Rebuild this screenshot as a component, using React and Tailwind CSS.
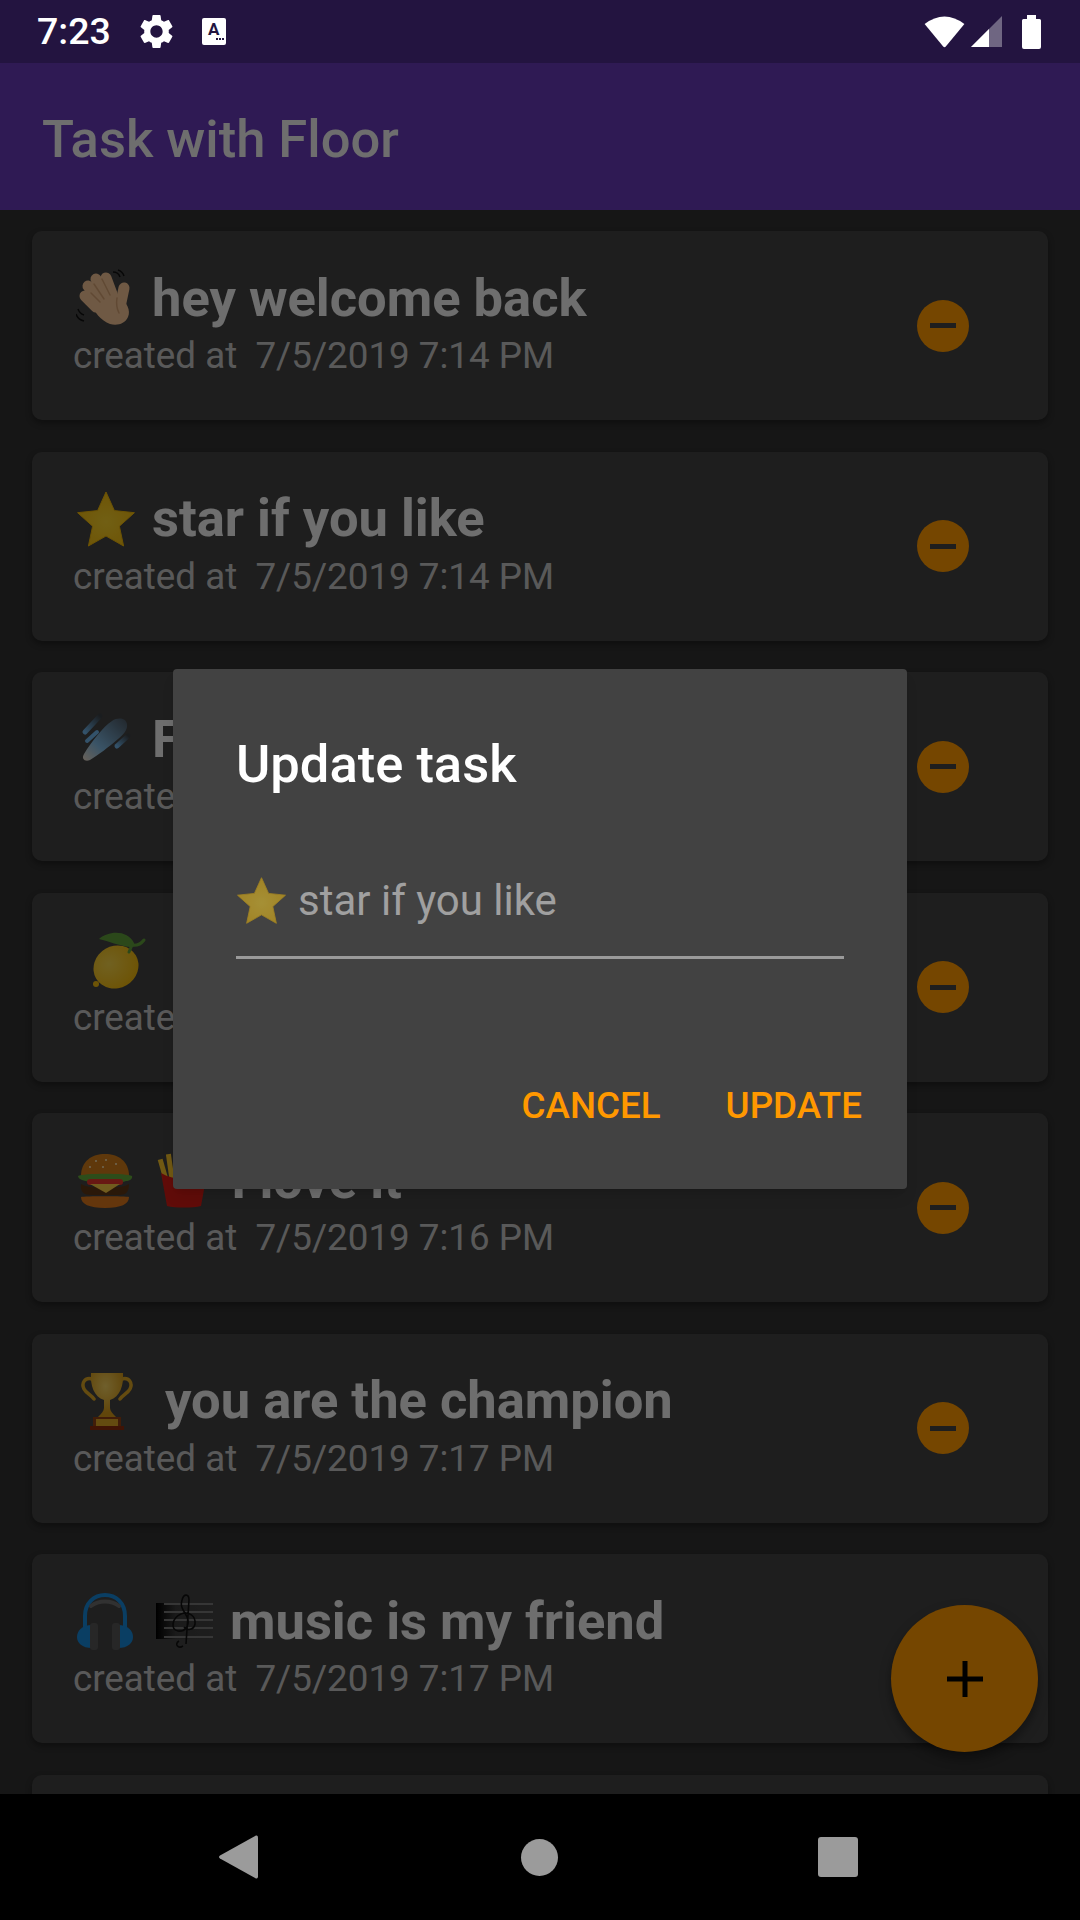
import React from 'react';

function Star({ size = 58, className = '' }) {
  return (
    <svg width={size} height={size} viewBox="0 0 58 58" className={className}>
      <defs>
        <radialGradient id="starFill" cx="50%" cy="55%" r="55%">
          <stop offset="0%" stopColor="#f7d02c" />
          <stop offset="100%" stopColor="#efb90f" />
        </radialGradient>
      </defs>
      <path
        d="M29 2l8.400 18.600 20 2.100-15 13.500 4.200 19.800L29 46 11.400 56l4.200-19.800-15-13.500 20-2.100z"
        fill="url(#starFill)"
        stroke="#eab308"
        strokeWidth="1"
        strokeLinejoin="round"
      />
    </svg>
  );
}

function Hand() {
  return (
    <svg width="58" height="58" viewBox="0 0 58 58">
      <g stroke="#f2c294" strokeLinecap="round" fill="none" strokeWidth="11">
        <path d="M20 38L9 27" />
        <path d="M24 32L12 17" />
        <path d="M30 27L20 10" />
        <path d="M36 25L30 9" />
        <path d="M44 38L48 19" />
      </g>
      <path d="M15 30c7-7 20-9 28-3 8 6 12 15 9 21-3 7-11 9-18 7-9-3-16-13-19-19-1-3-1-4 0-6z" fill="#f2c294" />
      <g stroke="#d3a072" strokeWidth="1.500" fill="none" strokeLinecap="round">
        <path d="M15 24l9 9" />
        <path d="M18 15l10 15" />
        <path d="M26 10l8 16" />
        <path d="M41 29c-1 6 0 11 2 15" />
      </g>
      <path d="M37 3c3 0 6 2 7 5M42 1c3 1 5 3 6 6" stroke="#111" strokeWidth="1.500" fill="none" />
      <path d="M2 40c1 3 3 5 6 6M0 45c1 3 4 6 8 7" stroke="#111" strokeWidth="1.500" fill="none" />
    </svg>
  );
}

function Comet() {
  return (
    <svg width="58" height="58" viewBox="0 0 58 58">
      <defs>
        <linearGradient id="cometFill" x1="0" y1="1" x2="1" y2="0">
          <stop offset="0%" stopColor="#e6d6c4" />
          <stop offset="35%" stopColor="#7fb7e0" />
          <stop offset="100%" stopColor="#4a5560" />
        </linearGradient>
        <linearGradient id="cometTail" x1="0" y1="1" x2="1" y2="0">
          <stop offset="0%" stopColor="#6fb2e6" />
          <stop offset="100%" stopColor="#3a3f44" />
        </linearGradient>
      </defs>
      <path d="M8 44c8-13 19-27 28-33 6-4 14-3 15 3 1 6-4 11-9 15-9 8-20 16-28 21-5 2-9-1-6-6z" fill="url(#cometFill)" />
      <path d="M9 22L24 6" stroke="url(#cometTail)" strokeWidth="5" strokeLinecap="round" />
      <path d="M11 31l10-9" stroke="#6fb2e6" strokeWidth="4" strokeLinecap="round" />
      <path d="M41 36l11-10" stroke="url(#cometTail)" strokeWidth="5" strokeLinecap="round" />
    </svg>
  );
}

function Lemon() {
  return (
    <svg width="58" height="58" viewBox="0 0 58 58">
      <defs>
        <radialGradient id="lemonFill" cx="40%" cy="35%" r="65%">
          <stop offset="0%" stopColor="#f5d348" />
          <stop offset="100%" stopColor="#eeb70f" />
        </radialGradient>
      </defs>
      <ellipse cx="27" cy="36" rx="23" ry="21" transform="rotate(-30 27 36)" fill="url(#lemonFill)" />
      <circle cx="7" cy="53" r="3" fill="#eeb70f" />
      <path d="M10 8C20-1 39-1 45 12c1 3-1 4-4 4C30 15 20 10 10 8z" fill="#5f9e3a" />
      <path d="M42 14c5 1 10-1 13-5M43 14l-3 7" stroke="#5f9e3a" strokeWidth="3" strokeLinecap="round" fill="none" />
    </svg>
  );
}

function Burger() {
  return (
    <svg width="58" height="58" viewBox="0 0 58 58">
      <path d="M5 25C5 10 16 3 29 3s24 7 24 22z" fill="#d07a18" />
      <g fill="#f5e3b8">
        <circle cx="20" cy="10" r="1" />
        <circle cx="30" cy="9" r="1" />
        <circle cx="40" cy="13" r="1" />
        <circle cx="27" cy="16" r="1" />
        <circle cx="14" cy="16" r="1" />
      </g>
      <path d="M2 25c5-3 49-3 54 0 1 3-3 5-6 5-4 2-8 0-11 2-3-1-6 1-10 0-4 1-7-2-11-1-4 0-9-1-12-2-2-1-4-2-4-4z" fill="#63a83a" />
      <rect x="11" y="28" width="36" height="6" rx="3" fill="#e2352b" />
      <path d="M5 33c-1 8 3 11 10 11h28c7 0 10-3 10-11-5 3-10 3-15 3H20c-5 0-10 0-15-3z" fill="#5d3514" />
      <path d="M14 33h30L30 42z" fill="#f7c843" />
      <path d="M5 46c3-1 45-1 48 0 0 7-8 11-24 11S5 53 5 46z" fill="#d9761c" />
    </svg>
  );
}

function Fries() {
  return (
    <svg width="58" height="58" viewBox="0 0 58 58">
      <g fill="#f6c32a">
        <rect x="6" y="8" width="5" height="26" transform="rotate(-16 8 20)" />
        <rect x="13" y="3" width="5" height="30" transform="rotate(-8 15 18)" />
        <rect x="21" y="0" width="5" height="32" />
        <rect x="29" y="3" width="5" height="30" />
        <rect x="37" y="1" width="5" height="32" transform="rotate(7 39 18)" />
        <rect x="44" y="8" width="5" height="26" transform="rotate(14 46 20)" />
      </g>
      <path d="M6 22c14 8 32 8 46 0l-6 33c-8 2-26 2-34 0z" fill="#d41c14" />
    </svg>
  );
}

function Trophy() {
  return (
    <svg width="58" height="58" viewBox="0 0 58 58">
      <defs>
        <radialGradient id="cupFill" cx="45%" cy="30%" r="60%">
          <stop offset="0%" stopColor="#f2cf60" />
          <stop offset="100%" stopColor="#d49a1a" />
        </radialGradient>
      </defs>
      <path d="M16 7C9 5 5 11 8 17c2 4 7 6 10 10M46 7c7-2 11 4 8 10-2 4-7 6-10 10" stroke="#d9a423" strokeWidth="3.500" fill="none" strokeLinecap="round" />
      <path d="M15 1h32c1 12-3 24-13 27v8c0 3 3 6 6 9H22c3-3 6-6 6-9v-8C18 25 14 13 15 1z" fill="url(#cupFill)" />
      <rect x="17" y="45" width="28" height="10" fill="#8f3f14" />
      <rect x="20" y="47" width="22" height="7" fill="#d9a423" />
      <rect x="14" y="54" width="34" height="4" fill="#8a2a0c" />
    </svg>
  );
}

function Headphones() {
  return (
    <svg width="58" height="58" viewBox="0 0 58 58">
      <path d="M9 36V24C9 11 18 3 29 3s20 8 20 21v12" stroke="#1787d8" strokeWidth="4" fill="none" />
      <path d="M15 14c8-6 20-6 28 0" stroke="#6b6b6b" strokeWidth="4" fill="none" strokeLinecap="round" />
      <path d="M16 33C6 33 1 39 1 45s5 11 15 11z" fill="#1787d8" />
      <path d="M42 33c10 0 15 6 15 12s-5 11-15 11z" fill="#1787d8" />
      <rect x="14" y="31" width="8" height="27" rx="3" fill="#555" />
      <rect x="36" y="31" width="8" height="27" rx="3" fill="#555" />
    </svg>
  );
}

function Score() {
  return (
    <svg width="58" height="58" viewBox="0 0 58 58">
      <defs>
        <linearGradient id="scoreFill" x1="0" y1="0" x2="1" y2="0">
          <stop offset="0%" stopColor="#000" />
          <stop offset="35%" stopColor="#3a3a3a" />
          <stop offset="100%" stopColor="#424242" />
        </linearGradient>
      </defs>
      <rect x="1" y="11" width="57" height="36" fill="url(#scoreFill)" />
      <g fill="#777">
        <rect x="9" y="11" width="49" height="2" />
        <rect x="9" y="19" width="49" height="2" />
        <rect x="9" y="27" width="49" height="2" />
        <rect x="9" y="35" width="49" height="2" />
        <rect x="9" y="44" width="49" height="2" />
      </g>
      <path d="M28 54c-5 3-9-2-4-5M31 52L34 8c0-6-5-7-7 0-3 9 5 13 6 20 1 6-3 12-10 11-8-2-6-13 3-17 8-3 15 2 14 10-1 6-8 7-11 3" stroke="#111" strokeWidth="1.600" fill="none" />
    </svg>
  );
}

const tasks = [
  { icons: [Hand], text: 'hey welcome back', gap: 18, date: '7/5/2019 7:14 PM' },
  { icons: [Star], text: 'star if you like', gap: 17, date: '7/5/2019 7:14 PM', lead: 3 },
  { icons: [Comet], text: 'F', gap: 18, date: '7/5/2019 7:15 PM' },
  { icons: [Lemon], text: '', gap: 0, date: '7/5/2019 7:15 PM', lead: 15 },
  { icons: [Burger, Fries], text: 'I love it', gap: 18, date: '7/5/2019 7:16 PM', iconGap: 21 },
  { icons: [Trophy], text: 'you are the champion', gap: 31, date: '7/5/2019 7:17 PM' },
  { icons: [Headphones, Score], text: 'music is my friend', gap: 17, date: '7/5/2019 7:17 PM', iconGap: 21 },
  { empty: true },
];

function TaskCard({ task }) {
  return (
    <div className="flex h-[189px] shrink-0 items-center justify-between rounded-[10px] bg-[#424242] pl-[42px] pr-[79px] shadow-[0_3px_6px_rgba(0,0,0,0.35)]">
      {!task.empty && (
        <div className="self-start pt-[36px]">
          <div className="flex h-[62px] items-center text-[52.5px] font-bold leading-none text-[#f0f0f0]">
            <div className="flex" style={{ marginLeft: task.lead || 2, gap: task.iconGap || 0 }}>
              {task.icons.map((Icon, i) => <Icon key={i} />)}
            </div>
            <span style={{ marginLeft: task.gap }}>{task.text}</span>
          </div>
          <p className="-ml-[1px] mt-[5px] whitespace-pre text-[36.75px] leading-[43px] text-white/70">created at  {task.date}</p>
        </div>
      )}
      {!task.empty && (
        <div className="flex h-[52px] w-[52px] items-center justify-center rounded-full bg-[#ff9800]">
          <div className="h-[5px] w-[26px] bg-[#424242]" />
        </div>
      )}
    </div>
  );
}

export default function App() {
  return (
    <div className="flex h-[1920px] w-[1080px] flex-col overflow-hidden bg-black font-[Roboto,sans-serif]">
      {/* status bar */}
      <div className="flex h-[63px] shrink-0 items-center bg-[#231440] pl-[37px] text-white">
        <span className="text-[37.500px] font-medium leading-none">7:23</span>
        <svg width="41" height="41" viewBox="0 0 24 24" fill="#fff" className="ml-[25px]">
          <path d="M19.14 12.94c.04-.3.06-.61.06-.94 0-.32-.02-.64-.07-.94l2.03-1.58c.18-.14.23-.41.12-.61l-1.92-3.32c-.12-.22-.37-.29-.59-.22l-2.39.96c-.5-.38-1.03-.7-1.62-.94l-.36-2.54c-.04-.24-.24-.41-.48-.41h-3.84c-.24 0-.43.17-.47.41l-.36 2.54c-.59.24-1.13.57-1.62.94l-2.39-.96c-.22-.08-.47 0-.59.22L2.74 8.87c-.12.21-.08.47.12.61l2.03 1.58c-.05.3-.09.63-.09.94s.02.64.07.94l-2.03 1.58c-.18.14-.23.41-.12.61l1.92 3.32c.12.22.37.29.59.22l2.39-.96c.5.38 1.03.7 1.62.94l.36 2.54c.05.24.24.41.48.41h3.84c.24 0 .44-.17.47-.41l.36-2.54c.59-.24 1.13-.56 1.62-.94l2.39.96c.22.08.47 0 .59-.22l1.92-3.32c.12-.22.07-.47-.12-.61l-2.01-1.58zM12 15.6c-1.98 0-3.6-1.62-3.6-3.6s1.62-3.6 3.6-3.6 3.6 1.62 3.6 3.6-1.62 3.6-3.6 3.6z" />
        </svg>
        <div className="ml-[25px] flex h-[27px] w-[24px] flex-col items-center rounded-[2px] bg-white pt-[3px]">
          <span className="text-[17px] font-bold leading-[16px] text-[#231440]">A</span>
          <div className="mt-[1px] flex w-full justify-end gap-[1px] pr-[2px]">
            <div className="h-[2px] w-[2px] bg-[#231440]" />
            <div className="h-[2px] w-[2px] bg-[#231440]" />
            <div className="h-[2px] w-[2px] bg-[#231440]" />
          </div>
        </div>
        <div className="ml-auto flex items-center pr-[39px]">
          <svg width="41" height="33" viewBox="0 0 41 33" fill="#fff">
            <path d="M.6 9Q20.5-6 40.4 9L21.8 31.6q-1.3 1.4-2.6 0z" />
          </svg>
          <svg width="31" height="31" viewBox="0 0 31 31" className="ml-[6px]">
            <path d="M0 31L31 0v31z" fill="#fff" fillOpacity="0.35" />
            <path d="M0 31L18 13v18z" fill="#fff" />
          </svg>
          <svg width="19" height="34" viewBox="0 0 19 34" fill="#fff" className="ml-[20px]">
            <path d="M5 0h9v4h3.500q1.500 0 1.500 1.500V32q0 2-2 2H2q-2 0-2-2V5.500Q0 4 1.500 4H5z" />
          </svg>
        </div>
      </div>

      <div className="relative min-h-0 flex-1">
        <div className="flex h-full flex-col bg-[#303030]">
          <header className="flex h-[147px] shrink-0 items-center bg-[#673ab7] pl-[42px] pt-[5px] text-[52.5px] font-medium text-[#f0f0f0]">
            Task with Floor
          </header>
          <div className="flex flex-col gap-[31.5px] overflow-hidden px-[32px] pt-[21px]">
            {tasks.map((task, i) => <TaskCard key={i} task={task} />)}
          </div>
        </div>

        {/* add button */}
        <div className="absolute left-[891px] top-[1542px] flex h-[147px] w-[147px] items-center justify-center rounded-full bg-[#ff9800] shadow-[0_6px_12px_rgba(0,0,0,0.4)]">
          <svg width="36" height="36" viewBox="0 0 36 36" fill="#000">
            <path d="M15.500 0h5v15.500H36v5H20.500V36h-5V20.500H0v-5h15.500z" />
          </svg>
        </div>

        {/* dim layer and dialog */}
        <div className="absolute inset-0 flex items-center justify-center bg-black/54">
          <div className="flex h-[520px] w-[734px] flex-col rounded-[4px] bg-[#424242] pl-[63px] pr-[63px] text-white shadow-lg">
            <h2 className="mt-[65px] text-[52.5px] font-medium leading-[60px]">Update task</h2>
            <div className="mt-[67px] flex h-[98px] items-center border-b-[3px] border-[#9a9a9a] pb-[16px]">
              <Star size={49} className="ml-[1px] opacity-55" />
              <span className="ml-[12px] text-[42px] text-white/50">star if you like</span>
            </div>
            <div className="-mr-[18px] mt-auto flex justify-end gap-[65px] pb-[64px] text-[36.75px] font-medium leading-none text-[#ff9800]">
              <span>CANCEL</span>
              <span>UPDATE</span>
            </div>
          </div>
        </div>
      </div>

      {/* nav bar */}
      <div className="relative flex h-[126px] shrink-0 items-center bg-black">
        <svg width="39" height="44" viewBox="0 0 39 44" fill="#9b9b9b" className="ml-[219px]">
          <path d="M37 .5q2-.5 2 2v39q0 2.500-2 2L1 23.500q-2-1.500 0-3z" />
        </svg>
        <div className="ml-[263px] h-[37px] w-[37px] rounded-full bg-[#9b9b9b]" />
        <div className="ml-[260px] h-[40px] w-[40px] rounded-[3px] bg-[#9b9b9b]" />
      </div>
    </div>
  );
}
